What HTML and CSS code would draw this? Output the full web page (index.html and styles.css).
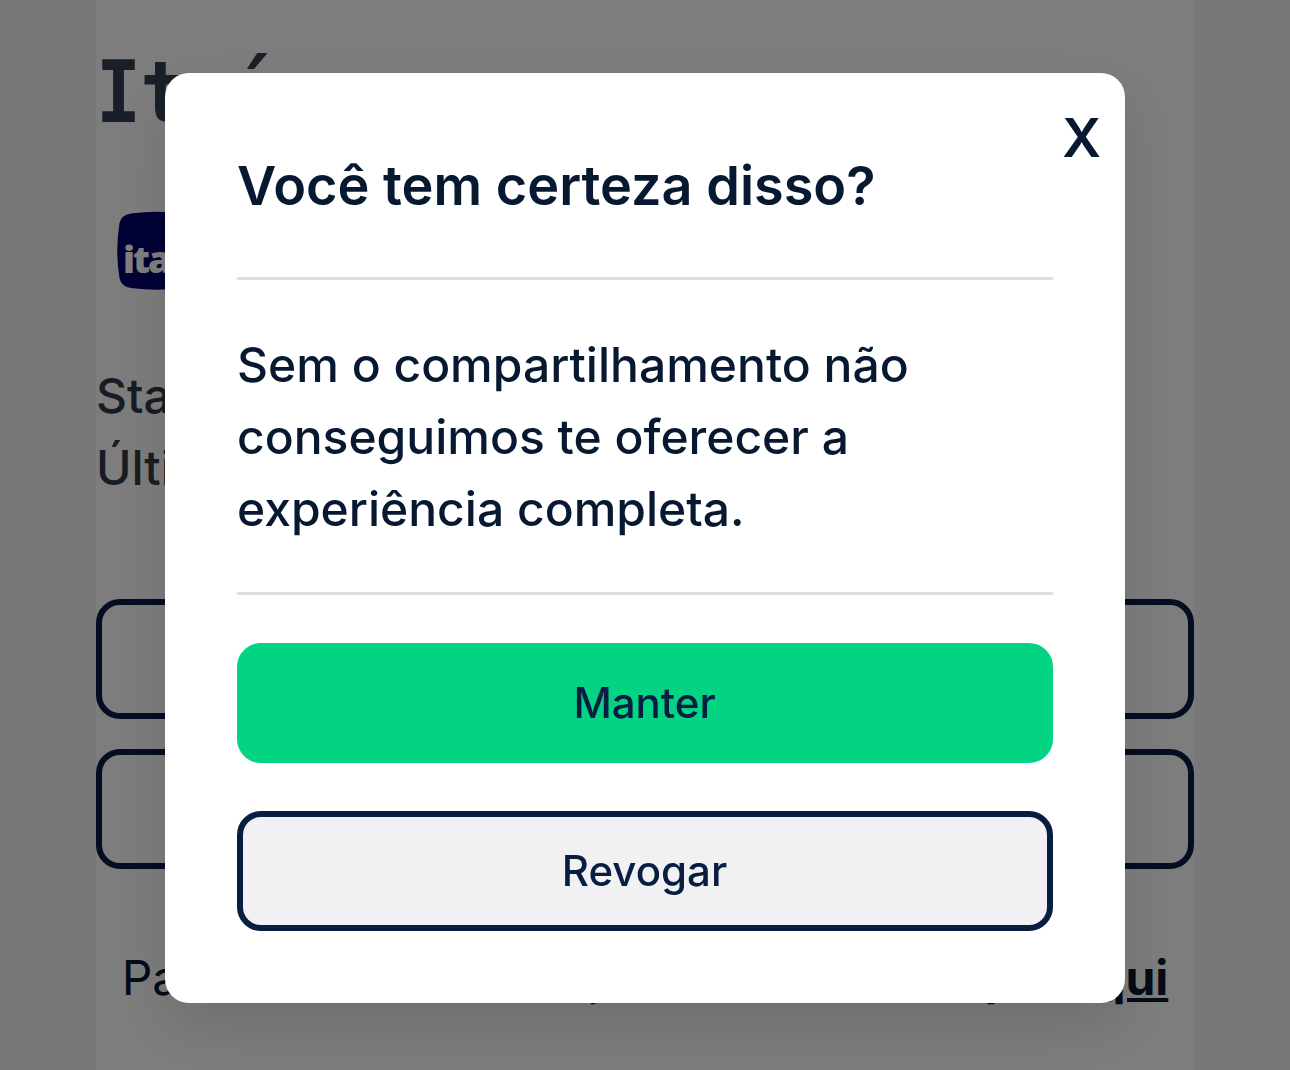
FILE: index.html
```html
<!DOCTYPE html>
<html lang="pt-BR">
<head>
  <meta charset="UTF-8" />
  <meta name="viewport" content="width=device-width, initial-scale=1.0" />
  <title>Itaú | Compartilhamento</title>

  <link rel="stylesheet" href="styles.css">
</head>

<body>
  <main class="page">
    <h1 class="bank-name">Itaú</h1>
    <svg class="bank-logo" width="80" height="80" viewBox="0 0 80 80">
      <path d="M14 2.500 Q40 -1 66 2.500 Q76 4 77.500 12 Q82 40 77.500 67 Q76 75.500 66 77 Q40 80.500 14 77 Q4 75.500 2.500 67 Q-2 40 2.500 12 Q4 4 14 2.500 Z" fill="#00006b" />
      <text class="logo-text" x="6" y="62">itaú</text>
    </svg>
    <div class="bank-info">
      <p>Status: Ativo</p>
      <p>Última atualização: hoje</p>
    </div>
    <div class="page-actions">
      <button class="btn btn-page">Renovar</button>
      <button class="btn btn-page">Revogar</button>
    </div>
    <p class="help-text">Para cancelar o compartilhamento <a href="#">clique aqui</a></p>
  </main>

  <div class="overlay">
    <div class="modal" role="dialog" aria-labelledby="modal-title">
      <button class="close" aria-label="Fechar">X</button>
      <h2 class="modal-title" id="modal-title">Você tem certeza disso?</h2>
      <p class="modal-text">Sem o compartilhamento não conseguimos te oferecer a experiência completa.</p>
      <div class="modal-actions">
        <button class="btn btn-primary">Manter</button>
        <button class="btn btn-secondary">Revogar</button>
      </div>
    </div>
  </div>
</body>
</html>
```

FILE: styles.css
```css
:root {
  --navy: #081d42;
  --text-color: #071831;
  --grey-bg: #f1f1f4;
  --line-color: #dedede;
  --green: #03d483;
}

* {
  box-sizing: border-box;
}

body {
  font-family: Inter, sans-serif;
  background-color: var(--grey-bg);
  color: var(--text-color);
  margin: 0;
  height: 100vh;
  overflow: hidden;
}

h1, h2, p {
  margin: 0;
}

/* page behind the modal */
.page {
  width: 1098px;
  height: 100%;
  margin: 0 auto;
  padding-top: 42px;
  background-color: #fbfbfb;
  display: flex;
  flex-direction: column;
}

.bank-name {
  font-family: "DejaVu Sans Mono", monospace;
  font-size: 86px;
  font-weight: bold;
  line-height: 100px;
  letter-spacing: -0.5px;
  color: #323f50;
  transform: scaleX(0.87);
  transform-origin: left;
}

.bank-logo {
  margin: 69px 0 0 21px;
}

.logo-text {
  font-family: "Open Sans", sans-serif;
  font-size: 37px;
  font-weight: 800;
  letter-spacing: -2px;
  fill: #fff;
}

.bank-info {
  margin-top: 69px;
  font-size: 48px;
  font-weight: 500;
  line-height: 72px;
  color: #323a46;
}

.page-actions {
  margin-top: 95px;
  display: flex;
  flex-direction: column;
  gap: 30px;
}

.help-text {
  margin-top: 73px;
  font-size: 48px;
  line-height: 72px;
  text-align: center;
  white-space: nowrap;
}

.help-text a {
  color: inherit;
  font-weight: bold;
}

.btn {
  width: 100%;
  height: 120px;
  padding: 0 1px 2px 0;
  border: 6px solid var(--navy);
  border-radius: 24px;
  font-family: inherit;
  font-size: 42px;
  font-weight: 500;
  color: var(--navy);
  cursor: pointer;
}

.btn-page {
  background-color: transparent;
}

/* modal */
.overlay {
  position: fixed;
  inset: 0;
  background-color: rgba(0, 0, 0, 0.5);
  display: flex;
  justify-content: center;
  align-items: flex-start;
  padding-top: 73px;
}

.modal {
  position: relative;
  width: 960px;
  height: 930px;
  padding: 72px;
  background-color: #fff;
  border-radius: 24px;
  box-shadow: 0 24px 60px rgba(0, 0, 0, 0.12);
}

.close {
  position: absolute;
  top: 32px;
  right: 24px;
  padding: 0;
  background: none;
  border: none;
  font-family: inherit;
  font-size: 54px;
  font-weight: 600;
  line-height: 66px;
  color: var(--text-color);
  cursor: pointer;
}

.modal-title {
  padding-bottom: 51px;
  font-size: 54px;
  font-weight: 600;
  line-height: 81px;
  border-bottom: 3px solid var(--line-color);
}

.modal-text {
  padding: 49px 0 47px;
  font-size: 48px;
  font-weight: 500;
  line-height: 72px;
  border-bottom: 3px solid var(--line-color);
}

.modal-actions {
  margin-top: 48px;
  display: flex;
  flex-direction: column;
  gap: 48px;
}

.btn-primary {
  background-color: var(--green);
  border-color: var(--green);
}

.btn-secondary {
  background-color: var(--grey-bg);
}
```
